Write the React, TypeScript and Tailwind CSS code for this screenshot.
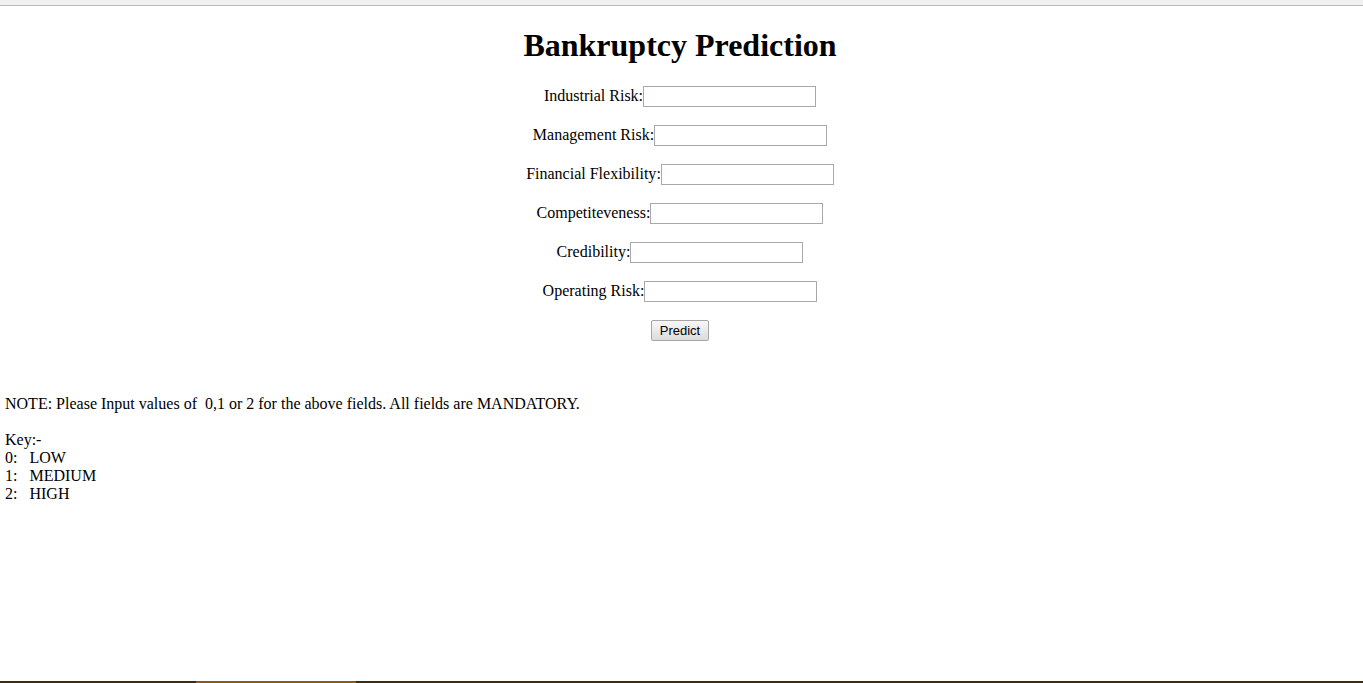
import React from "react";

const fields = [
  "Industrial Risk",
  "Management Risk",
  "Financial Flexibility",
  "Competiteveness",
  "Credibility",
  "Operating Risk",
];

export default function App() {
  return (
    <div className="flex flex-col w-[1363px] h-[683px] bg-white overflow-hidden text-black font-['Times_New_Roman','Liberation_Serif',serif] text-[16px]">
      <div className="h-[6px] shrink-0 bg-[#f0f0f0] border-b border-[#b9b9b9]" />
      <div className="flex flex-col">
        <div className="flex flex-col pr-[3px]">
          <h1 className="pt-[21px] text-center text-[32px] font-bold leading-[37px]">
            Bankruptcy Prediction
          </h1>
          <form className="flex flex-col mt-[22px]" onSubmit={(e) => e.preventDefault()}>
            {fields.map((f) => (
              <div key={f} className="flex justify-center items-baseline h-[39px]">
                <label className="leading-[18px]">{f}:</label>
                <input
                  type="text"
                  className="w-[173px] h-[21px] border border-[#a9a9a9] bg-white px-[2px] text-[13px] font-['Arial','Liberation_Sans',sans-serif] outline-none"
                />
              </div>
            ))}
            <div className="flex justify-center">
              <button
                type="submit"
                className="w-[58px] h-[21px] border border-[#a6a6a6] rounded-[2px] bg-gradient-to-b from-[#f7f7f7] to-[#dcdcdc] text-[13px] leading-[19px] font-['Arial','Liberation_Sans',sans-serif] text-black"
              >
                Predict
              </button>
            </div>
          </form>
        </div>
        <div className="mt-[54px] pl-[5px] leading-[18px] whitespace-pre">
          <div>NOTE: Please Input values of  0,1 or 2 for the above fields. All fields are MANDATORY.</div>
          <div className="h-[18px]" />
          <div>Key:-</div>
          <div>0:   LOW</div>
          <div>1:   MEDIUM</div>
          <div>2:   HIGH</div>
        </div>
      </div>
      <div className="mt-auto h-[2px] shrink-0 flex">
        <div className="w-[196px] bg-[#3d2a10]" />
        <div className="w-[160px] bg-[#8b5a1b]" />
        <div className="flex-1 bg-[#3d2a10]" />
      </div>
    </div>
  );
}
